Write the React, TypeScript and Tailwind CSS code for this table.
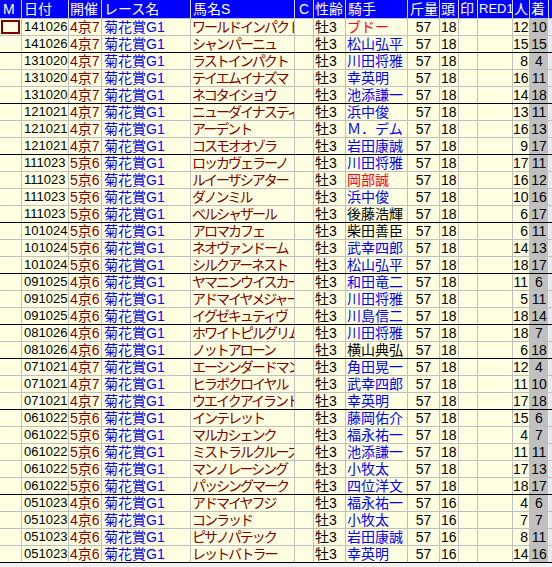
import React from "react";

type Row = {
  date: string;
  kai: string;
  horse: string;
  jockey: string;
  jc: "b" | "r" | "k";
  tou: string;
  nin: string;
  chaku: string;
  sep?: boolean;
};

const raw: [string, string, string, string, "b" | "r" | "k", string, string, string][] = [
  ["141026", "4京7", "ワールドインパクト", "ブドー", "r", "18", "12", "10"],
  ["141026", "4京7", "シャンパーニュ", "松山弘平", "b", "18", "15", "15"],
  ["131020", "4京7", "ラストインパクト", "川田将雅", "b", "18", "8", "4"],
  ["131020", "4京7", "テイエムイナズマ", "幸英明", "b", "18", "16", "11"],
  ["131020", "4京7", "ネコタイショウ", "池添謙一", "b", "18", "14", "18"],
  ["121021", "4京7", "ニューダイナスティ", "浜中俊", "b", "18", "13", "11"],
  ["121021", "4京7", "アーデント", "Ｍ．デム", "b", "18", "16", "13"],
  ["121021", "4京7", "コスモオオゾラ", "岩田康誠", "b", "18", "9", "17"],
  ["111023", "5京6", "ロッカヴェラーノ", "川田将雅", "b", "18", "17", "11"],
  ["111023", "5京6", "ルイーザシアター", "岡部誠", "r", "18", "16", "12"],
  ["111023", "5京6", "ダノンミル", "浜中俊", "b", "18", "10", "16"],
  ["111023", "5京6", "ベルシャザール", "後藤浩輝", "k", "18", "6", "17"],
  ["101024", "5京6", "アロマカフェ", "柴田善臣", "k", "18", "6", "11"],
  ["101024", "5京6", "ネオヴァンドーム", "武幸四郎", "b", "18", "14", "13"],
  ["101024", "5京6", "シルクアーネスト", "松山弘平", "b", "18", "18", "17"],
  ["091025", "4京6", "ヤマニンウイスカー", "和田竜二", "b", "18", "11", "6"],
  ["091025", "4京6", "アドマイヤメジャー", "川田将雅", "b", "18", "5", "11"],
  ["091025", "4京6", "イグゼキュティヴ", "川島信二", "b", "18", "18", "14"],
  ["081026", "4京6", "ホワイトピルグリム", "川田将雅", "b", "18", "18", "7"],
  ["081026", "4京6", "ノットアローン", "横山典弘", "k", "18", "6", "18"],
  ["071021", "4京7", "エーシンダードマン", "角田晃一", "b", "18", "12", "4"],
  ["071021", "4京7", "ヒラボクロイヤル", "武幸四郎", "b", "18", "11", "10"],
  ["071021", "4京7", "ウエイクアイランド", "幸英明", "b", "18", "17", "18"],
  ["061022", "5京6", "インテレット", "藤岡佑介", "b", "18", "15", "6"],
  ["061022", "5京6", "マルカシェンク", "福永祐一", "b", "18", "4", "7"],
  ["061022", "5京6", "ミストラルクルーズ", "池添謙一", "b", "18", "11", "11"],
  ["061022", "5京6", "マンノレーシング", "小牧太", "b", "18", "17", "13"],
  ["061022", "5京6", "パッシングマーク", "四位洋文", "b", "18", "18", "17"],
  ["051023", "4京6", "アドマイヤフジ", "福永祐一", "b", "16", "4", "6"],
  ["051023", "4京6", "コンラッド", "小牧太", "b", "16", "7", "7"],
  ["051023", "4京6", "ピサノパテック", "岩田康誠", "b", "16", "8", "11"],
  ["051023", "4京6", "レットバトラー", "幸英明", "b", "16", "14", "16"],
];

const rows: Row[] = raw.map((r, i) => ({
  date: r[0],
  kai: r[1],
  horse: r[2],
  jockey: r[3],
  jc: r[4],
  tou: r[5],
  nin: r[6],
  chaku: r[7],
  sep: i === raw.length - 1 || raw[i + 1][0] !== r[0],
}));

const jockeyColor = {
  b: "text-[#0000ff]",
  r: "text-[#ff0020]",
  k: "text-black",
};

const cell = "h-full shrink-0 overflow-hidden whitespace-nowrap border-r border-[#c0c0c0] leading-[16px]";
const head = "h-full shrink-0 overflow-hidden whitespace-nowrap border-r border-[#d8d8f8] leading-[18px]";

export default function App() {
  return (
    <div
      className="w-[552px] h-[567px] overflow-hidden bg-[#f0f0f0] text-[14px] text-black"
      style={{ fontFamily: '"Liberation Sans", "Noto Sans CJK JP", sans-serif' }}
    >
      {/* header */}
      <div className="flex h-[19px] bg-[#0000ff] text-white border-b border-[#c0c0c0]">
        <div className={`${head} w-[22px] pl-[3px]`}>M</div>
        <div className={`${head} w-[47px] pl-[2px]`}>日付</div>
        <div className={`${head} w-[33px] pl-[1px]`}>開催</div>
        <div className={`${head} w-[89px] pl-[2px]`}>レース名</div>
        <div className={`${head} w-[104px] pl-[2px]`}>馬名S</div>
        <div className={`${head} w-[19px] text-center`}>C</div>
        <div className={`${head} w-[32px] pl-[1px]`}>性齢</div>
        <div className={`${head} w-[62px] pl-[2px]`}>騎手</div>
        <div className={`${head} w-[32px] pl-[2px]`}>斤量</div>
        <div className={`${head} w-[19px] pl-[1px]`}>頭</div>
        <div className={`${head} w-[19px] pl-[1px]`}>印</div>
        <div className={`${head} w-[35px] pl-[1px] text-[13px]`}>RED1</div>
        <div className={`${head} w-[17px] pl-[1px]`}>人</div>
        <div className={`${head} w-[19px] pl-[1px]`}>着</div>
        <div className="flex-1" />
      </div>

      {rows.map((r, i) => (
        <div
          key={i}
          className={`flex h-[17px] bg-[#ffffe1] border-b ${r.sep ? "border-black" : "border-[#c0c0c0]"}`}
        >
          <div className={`${cell} w-[22px] p-[1px]`}>
            {i === 0 && <div className="h-full w-full border-2 border-[#800000]" />}
          </div>
          <div className={`${cell} w-[47px] pl-[2px] text-[13px]`}>{r.date}</div>
          <div className={`${cell} w-[33px] pl-[1px] text-[#800000]`}>{r.kai}</div>
          <div className={`${cell} w-[89px] pl-[2px] text-[#0000ff]`}>菊花賞G1</div>
          <div className={`${cell} w-[104px] pl-[1px] text-[#800000] tracking-[-2px]`}>{r.horse}</div>
          <div className={`${cell} w-[19px]`} />
          <div className={`${cell} w-[32px] pl-[1px]`}>牡3</div>
          <div className={`${cell} w-[62px] pl-[1px] ${jockeyColor[r.jc]}`}>{r.jockey}</div>
          <div className={`${cell} w-[32px] text-center`}>57</div>
          <div className={`${cell} w-[19px] pl-[1px]`}>{r.tou}</div>
          <div className={`${cell} w-[19px]`} />
          <div className={`${cell} w-[35px]`} />
          <div className={`${cell} w-[17px] text-right pr-[1px]`}>{r.nin}</div>
          <div className={`${cell} w-[19px] text-center bg-[#c0c0c0] border-[#f0f0f0]`}>{r.chaku}</div>
          <div className="flex-1 bg-[#e8e8f0]" />
        </div>
      ))}
    </div>
  );
}
